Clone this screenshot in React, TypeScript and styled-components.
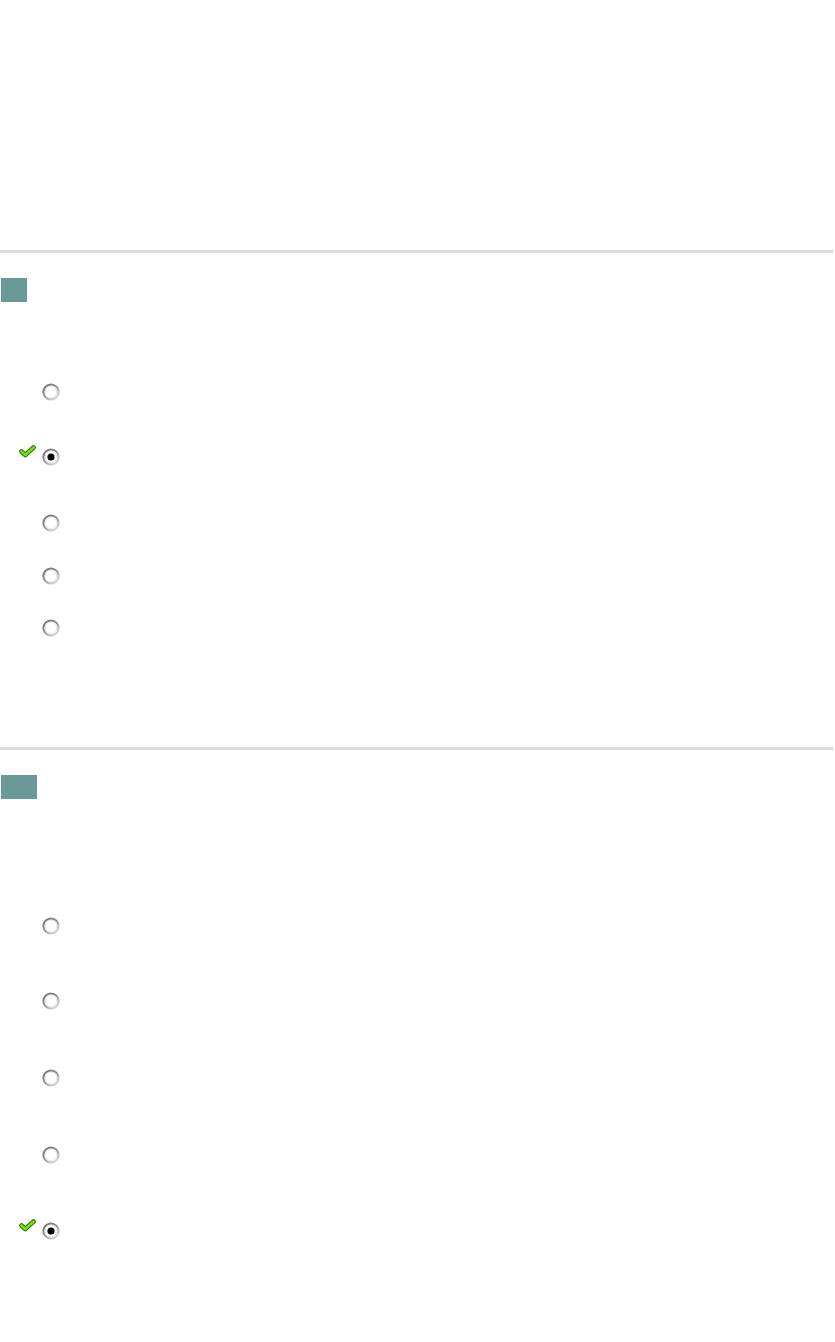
import React from "react";
import styled, { createGlobalStyle } from "styled-components";

const Global = createGlobalStyle`
  html, body { margin: 0; padding: 0; background: #ffffff; }
  body { font-family: "Liberation Sans", Arial, sans-serif; font-size: 13px; color: #000; }
`;

const Page = styled.div`
  width: 835px;
  display: flex;
  flex-direction: column;
`;

const TopSpace = styled.div`
  height: 250px;
`;

const Section = styled.section`
  border-top: 3px solid #dcdcdc;
  width: 833px;
  display: flex;
  flex-direction: column;
`;

const Badge = styled.div<{ $w: number }>`
  margin: 25px 0 0 1px;
  width: ${(p) => p.$w}px;
  height: 24px;
  background: #699999;
`;

const Options = styled.div<{ $top: number }>`
  margin-top: ${(p) => p.$top}px;
  display: flex;
  flex-direction: column;
`;

const Row = styled.div<{ $h: number }>`
  height: ${(p) => p.$h}px;
  display: flex;
  align-items: flex-start;
  position: relative;
  padding-left: 42px;
`;

const Tick = styled.span`
  position: absolute;
  left: 19px;
  top: -3px;
  width: 17px;
  height: 13px;
  display: block;
`;

const RadioBox = styled.span`
  width: 18px;
  height: 18px;
  display: block;
`;

function Radio({ checked }: { checked?: boolean }) {
  return (
    <RadioBox>
      <svg width="18" height="18" viewBox="0 0 18 18">
        <defs>
          <linearGradient id="rg" x1="0" y1="0" x2="0.8" y2="1">
            <stop offset="0" stopColor="#6e6e6e" />
            <stop offset="0.5" stopColor="#8e8e8e" />
            <stop offset="1" stopColor="#d8d8d8" />
          </linearGradient>
        </defs>
        <circle cx="9" cy="9" r="7.6" fill="#fff" stroke="url(#rg)" strokeWidth="2" />
        <circle cx="9" cy="9" r="5.9" fill="none" stroke="#e6e6e6" strokeWidth="1" />
        {checked && <circle cx="9" cy="9" r="3.6" fill="#000" />}
      </svg>
    </RadioBox>
  );
}

function Check() {
  return (
    <Tick>
      <svg width="17" height="13" viewBox="0 0 17 13">
        <path
          d="M2.5 6.5 L6.3 10 L14.5 2.5"
          fill="none"
          stroke="#2f6d05"
          strokeWidth="4.6"
          strokeLinejoin="round"
          strokeLinecap="round"
        />
        <path
          d="M2.5 6.5 L6.3 10 L14.5 2.5"
          fill="none"
          stroke="#6fe01a"
          strokeWidth="2.6"
          strokeLinejoin="round"
          strokeLinecap="round"
        />
      </svg>
    </Tick>
  );
}

type Opt = { h: number; checked?: boolean };

function Question({
  badgeWidth,
  top,
  options,
}: {
  badgeWidth: number;
  top: number;
  options: Opt[];
}) {
  return (
    <Section>
      <Badge $w={badgeWidth} />
      <Options $top={top}>
        {options.map((o, i) => (
          <Row key={i} $h={o.h}>
            {o.checked && <Check />}
            <Radio checked={o.checked} />
          </Row>
        ))}
      </Options>
    </Section>
  );
}

export default function App() {
  return (
    <Page>
      <Global />
      <TopSpace />
      <Question
        badgeWidth={26}
        top={81}
        options={[{ h: 65 }, { h: 66, checked: true }, { h: 53 }, { h: 52 }, { h: 128 }]}
      />
      <Question
        badgeWidth={36}
        top={118}
        options={[{ h: 75 }, { h: 77 }, { h: 77 }, { h: 76 }, { h: 119, checked: true }]}
      />
    </Page>
  );
}
